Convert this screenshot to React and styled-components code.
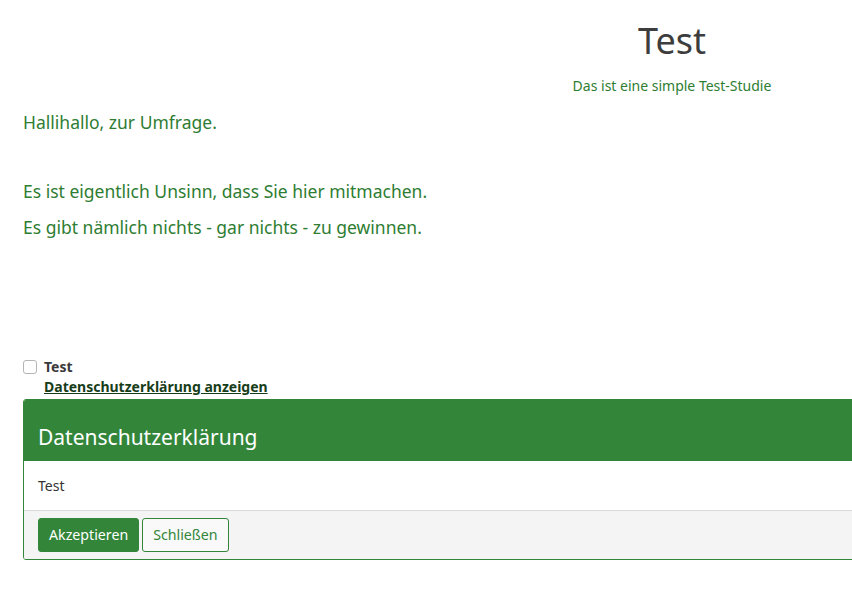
import React, { useState } from "react";
import styled, { createGlobalStyle } from "styled-components";

const GlobalStyle = createGlobalStyle`
  html, body {
    margin: 0;
    padding: 0;
    background: #fff;
    overflow: hidden;
  }
  body {
    font-family: "Noto Sans", "Open Sans", sans-serif;
  }
`;

const Page = styled.div`
  width: 1344px;
  box-sizing: border-box;
  padding: 0 23px;
`;

const Header = styled.header`
  text-align: center;
  padding-top: 18px;
`;

const Title = styled.h1`
  margin: 0;
  font-size: 36px;
  font-weight: 400;
  line-height: 46px;
  color: #3d3d3d;
`;

const Subtitle = styled.p`
  margin: 12px 0 0;
  font-size: 14px;
  line-height: 20px;
  color: #2e7d32;
`;

const Intro = styled.div`
  margin-top: 8px;
  color: #2e7d32;
  font-size: 17.5px;
`;

const Line = styled.p`
  margin: 0;
  line-height: 36px;
  min-height: ${(props) => (props.blank ? "33px" : "36px")};
`;

const Consent = styled.div`
  margin-top: 112px;
`;

const CheckRow = styled.label`
  display: flex;
  align-items: center;
  gap: 7px;
  font-size: 14px;
  font-weight: 700;
  color: #3a3a3a;
  line-height: 20px;
  cursor: pointer;
`;

const Box = styled.input`
  appearance: none;
  margin: 0;
  width: 14px;
  height: 14px;
  border: 1px solid #b5b5b5;
  border-radius: 3px;
  background: #fff;
  box-sizing: border-box;
  &:checked {
    background: #338639;
    border-color: #338639;
  }
`;

const ShowLink = styled.a`
  display: block;
  width: fit-content;
  margin: 1px 0 0 21px;
  font-size: 14px;
  font-weight: 700;
  line-height: 18px;
  color: #173d1a;
  text-decoration: underline;
  cursor: pointer;
`;

const Panel = styled.section`
  margin-top: 3px;
  border: 1px solid #338639;
  border-radius: 3px;
  overflow: hidden;
`;

const PanelHead = styled.div`
  background: #338639;
  color: #fff;
  font-size: 21px;
  line-height: 28px;
  padding: 23px 14px 10px;
`;

const PanelBody = styled.div`
  background: #fff;
  font-size: 14px;
  color: #333;
  line-height: 20px;
  padding: 15px 14px 14px;
`;

const PanelFoot = styled.div`
  display: flex;
  gap: 3px;
  background: #f4f4f4;
  border-top: 1px solid #d9d9d9;
  padding: 7px 14px 7px;
`;

const Button = styled.button`
  font-family: inherit;
  font-size: 14.2px;
  line-height: 20px;
  height: 34px;
  padding: 0 10px;
  border-radius: 3px;
  border: 1px solid #338639;
  background: ${(props) => (props.primary ? "#338639" : "#f9f9f9")};
  color: ${(props) => (props.primary ? "#fff" : "#338639")};
  cursor: pointer;
`;

const App = () => {
  const [checked, setChecked] = useState(false);
  return (
    <Page>
      <GlobalStyle />
      <Header>
        <Title>Test</Title>
        <Subtitle>Das ist eine simple Test-Studie</Subtitle>
      </Header>
      <Intro>
        <Line>Hallihallo, zur Umfrage.</Line>
        <Line blank />
        <Line>Es ist eigentlich Unsinn, dass Sie hier mitmachen.</Line>
        <Line>Es gibt nämlich nichts - gar nichts - zu gewinnen.</Line>
      </Intro>
      <Consent>
        <CheckRow>
          <Box type="checkbox" checked={checked} onChange={() => setChecked(!checked)} />
          Test
        </CheckRow>
        <ShowLink>Datenschutzerklärung anzeigen</ShowLink>
        <Panel>
          <PanelHead>Datenschutzerklärung</PanelHead>
          <PanelBody>Test</PanelBody>
          <PanelFoot>
            <Button primary onClick={() => setChecked(true)}>Akzeptieren</Button>
            <Button>Schließen</Button>
          </PanelFoot>
        </Panel>
      </Consent>
    </Page>
  );
};

export default App;
